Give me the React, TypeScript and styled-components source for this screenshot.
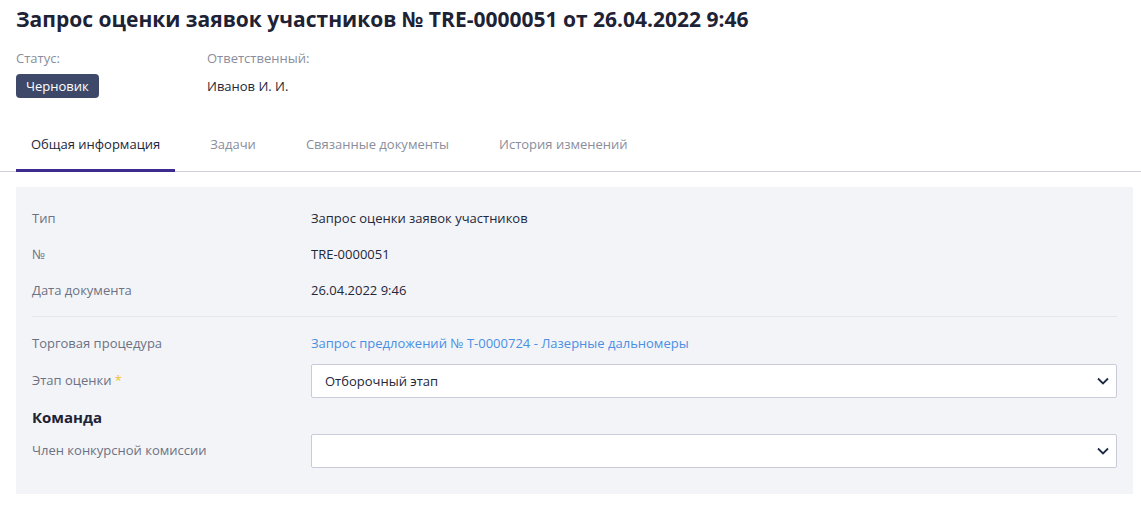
import React from "react";
import styled, { createGlobalStyle } from "styled-components";

const GlobalStyle = createGlobalStyle`
    body {
        margin: 0;
        background: #ffffff;
        font-family: "Open Sans", "Noto Sans", sans-serif;
        color: #23273a;
    }
`;

const ChevronDown = () => (
    <svg width="14" height="14" viewBox="0 0 14 14" fill="none">
        <path d="M2 4.5L7 9.5L12 4.5" stroke="#1f2a44" strokeWidth="1.8" />
    </svg>
);

const tabs = ["Общая информация", "Задачи", "Связанные документы", "История изменений"];

export default function App() {
    return (
        <Page>
            <GlobalStyle />
            <Header>
                <Title>Запрос оценки заявок участников № TRE-0000051 от 26.04.2022 9:46</Title>
                <Meta>
                    <MetaItem width="191px">
                        <MetaLabel>Статус:</MetaLabel>
                        <Badge>Черновик</Badge>
                    </MetaItem>
                    <MetaItem>
                        <MetaLabel>Ответственный:</MetaLabel>
                        <MetaValue>Иванов И. И.</MetaValue>
                    </MetaItem>
                </Meta>
            </Header>
            <TabBar>
                {tabs.map((t, i) => (
                    <Tab key={t} active={i === 0}>{t}</Tab>
                ))}
            </TabBar>
            <Panel>
                <Row>
                    <Label>Тип</Label>
                    <Value>Запрос оценки заявок участников</Value>
                </Row>
                <Row>
                    <Label>№</Label>
                    <Value>TRE-0000051</Value>
                </Row>
                <Row>
                    <Label>Дата документа</Label>
                    <Value>26.04.2022 9:46</Value>
                </Row>
                <Divider />
                <Row>
                    <Label>Торговая процедура</Label>
                    <Link>Запрос предложений № Т-0000724 - Лазерные дальномеры</Link>
                </Row>
                <Row>
                    <Label>Этап оценки <Star>*</Star></Label>
                    <Select>
                        <span>Отборочный этап</span>
                        <ChevronDown />
                    </Select>
                </Row>
                <Section>Команда</Section>
                <Row>
                    <Label>Член конкурсной комиссии</Label>
                    <Select>
                        <span></span>
                        <ChevronDown />
                    </Select>
                </Row>
            </Panel>
        </Page>
    );
}

const Page = styled.div`
    width: 1141px;
    height: 505px;
    overflow: hidden;
`;

const Header = styled.div`
    padding: 5px 16px 0;
`;

const Title = styled.h1`
    margin: 0;
    font-size: 21px;
    line-height: 29px;
    font-weight: 700;
    color: #1e2235;
`;

const Meta = styled.div`
    display: flex;
    margin-top: 15px;
`;

const MetaItem = styled.div<{ width?: string }>`
    display: flex;
    flex-direction: column;
    gap: 7px;
    width: ${(p) => p.width || "auto"};
`;

const MetaLabel = styled.span`
    font-size: 13px;
    line-height: 18px;
    color: #8a8e9c;
`;

const MetaValue = styled.span`
    font-size: 13px;
    line-height: 24px;
    color: #23273a;
`;

const Badge = styled.span`
    align-self: flex-start;
    height: 24px;
    padding: 0 10px;
    border-radius: 4px;
    background: #3e4868;
    color: #ffffff;
    font-size: 13px;
    line-height: 24px;
`;

const TabBar = styled.div`
    display: flex;
    gap: 20px;
    margin-top: 21px;
    padding: 0 16px;
    border-bottom: 1px solid #cfd1d8;
`;

const Tab = styled.div<{ active?: boolean }>`
    padding: 16px 15px 15px;
    font-size: 13px;
    line-height: 19px;
    color: ${(p) => (p.active ? "#23273a" : "#8a8e9c")};
    border-bottom: 3px solid ${(p) => (p.active ? "#3f2a8e" : "transparent")};
    margin-bottom: -1px;
`;

const Panel = styled.div`
    margin: 15px 8px 0 16px;
    padding: 13px 16px 27px;
    background: #f3f4f8;
`;

const Row = styled.div`
    display: grid;
    grid-template-columns: 279px 1fr;
    align-items: center;
    height: 36px;
    font-size: 13px;
`;

const Label = styled.span`
    color: #6c7283;
`;

const Value = styled.span`
    color: #23273a;
`;

const Link = styled.span`
    color: #4a8fe3;
`;

const Star = styled.span`
    color: #f5c02c;
`;

const Divider = styled.div`
    height: 1px;
    background: #e6e7ea;
    margin: 8px 0;
`;

const Select = styled.div`
    display: flex;
    align-items: center;
    justify-content: space-between;
    height: 34px;
    margin-top: 3px;
    box-sizing: border-box;
    padding: 0 6px 0 13px;
    background: #ffffff;
    border: 1px solid #c9ccd8;
    border-radius: 2px;
    color: #23273a;
`;

const Section = styled.div`
    margin: 10px 0 4px;
    font-size: 15px;
    line-height: 20px;
    font-weight: 700;
    color: #1e2235;
`;
